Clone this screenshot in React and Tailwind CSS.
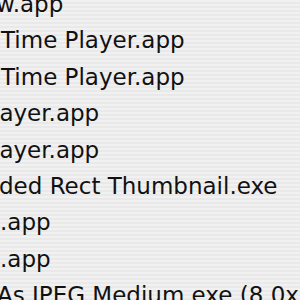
export default function App() {
  const rows = [
    { t: "w.app", ml: "ml-[-4px]" },
    { t: "Time Player.app", ml: "ml-[1px]" },
    { t: "Time Player.app", ml: "ml-[1px]" },
    { t: "layer.app", ml: "ml-[-7px]" },
    { t: "layer.app", ml: "ml-[-7px]" },
    { t: "ded Rect Thumbnail.exe", ml: "ml-[-1px]" },
    { t: ".app", ml: "ml-[0px]" },
    { t: ".app", ml: "ml-[0px]" },
    { t: "As JPEG Medium.exe (8.0x)", ml: "ml-[-3px]" },
  ];
  return (
    <div className="w-[300px] h-[300px] overflow-hidden bg-[repeating-linear-gradient(180deg,#f1f1f1_0px,#f1f1f1_2px,#e9e9e9_2px,#e9e9e9_4px)]">
      <div className="mt-[-14px] flex flex-col">
        {rows.map((r, i) => (
          <div
            key={i}
            className="h-[36.4px] leading-[36.4px] whitespace-nowrap text-[23px] text-[#111] font-['DejaVu_Sans',sans-serif]"
          >
            <span className={"block " + r.ml}>{r.t}</span>
          </div>
        ))}
      </div>
    </div>
  );
}
